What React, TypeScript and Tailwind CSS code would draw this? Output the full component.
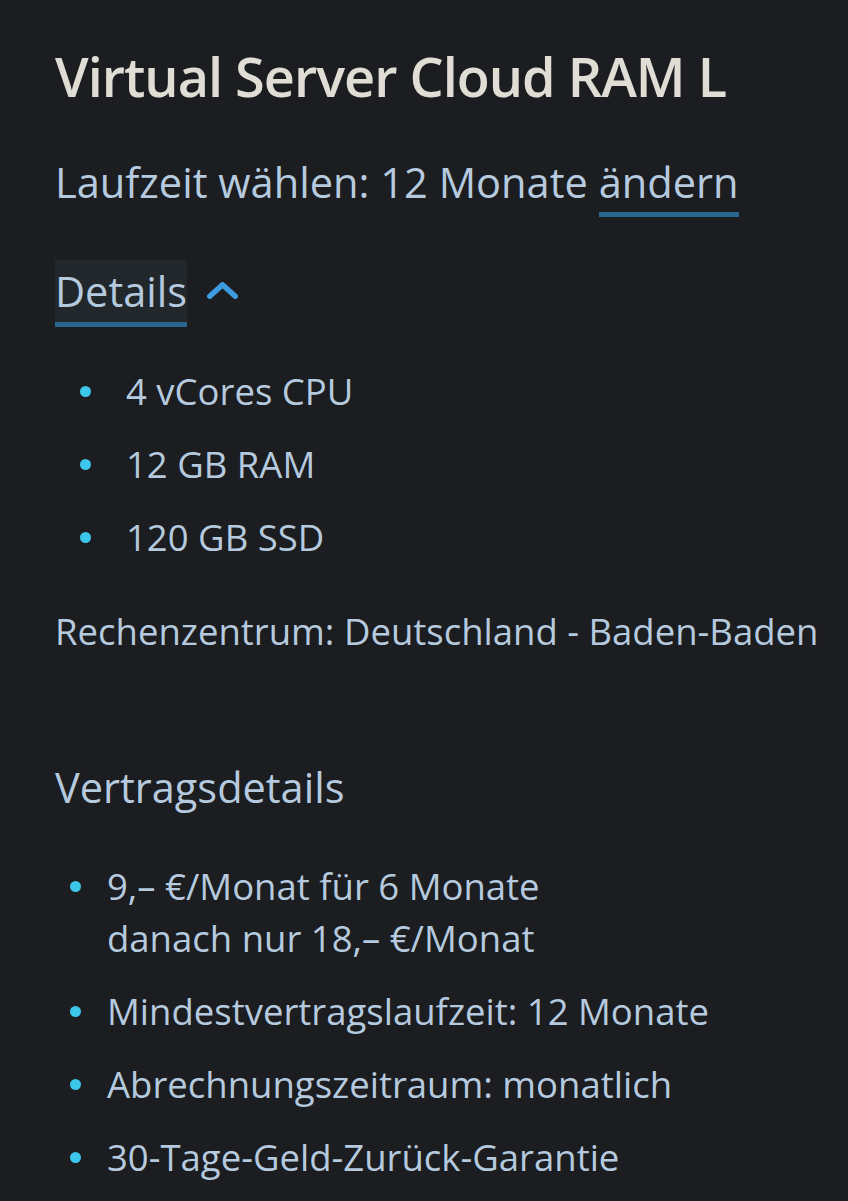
import React from "react";

const Bullet = ({ top, children }: { top: string; children: React.ReactNode }) => (
  <li className="flex items-start">
    <span className={`${top} h-[11px] w-[11px] shrink-0 rounded-full bg-[#3cc6ea]`} />
    {children}
  </li>
);

const App = () => {
  return (
    <div
      className="min-h-screen w-full bg-[#1b1d20] pl-[55px] pr-[20px] pt-[40px] text-[#b6cadf]"
      style={{ fontFamily: '"Open Sans", "Noto Sans", sans-serif' }}
    >
      <h1 className="text-[54px] font-semibold leading-[72px] tracking-[-1px] text-[#e0ddd5]">Virtual Server Cloud RAM L</h1>

      <div className="mt-[42px] text-[41.6px] leading-[56px]">
        Laufzeit wählen: 12 Monate{" "}
        <a className="border-b-[5px] border-[#2a6690] pb-[2px]">ändern</a>
      </div>

      <div className="mt-[50px] flex items-start gap-[20px]">
        <button className="border-b-[5px] border-[#2a6690] bg-[#22272c] text-[41.5px] leading-[62px]">Details</button>
        <svg width="31" height="17" viewBox="0 0 31 17" className="mt-[22px]">
          <path
            d="M2.75 14.25 L15.5 2.75 L28.25 14.25"
            fill="none"
            stroke="#3d9be0"
            strokeWidth="5.5"
            strokeLinecap="round"
            strokeLinejoin="round"
          />
        </svg>
      </div>

      <ul className="mt-[39px] flex flex-col gap-[23px] pl-[25px] text-[36.5px] leading-[50px]">
        <Bullet top="mt-[20px]"><div className="pl-[35px]">4 vCores CPU</div></Bullet>
        <Bullet top="mt-[20px]"><div className="pl-[35px]">12 GB RAM</div></Bullet>
        <Bullet top="mt-[20px]"><div className="pl-[35px]">120 GB SSD</div></Bullet>
      </ul>

      <p className="mt-[44px] whitespace-nowrap text-[36.5px] leading-[50px]">Rechenzentrum: Deutschland - Baden-Baden</p>

      <h2 className="mt-[103px] text-[41.5px] leading-[56px]">Vertragsdetails</h2>

      <ul className="mt-[45px] flex flex-col gap-[21px] pl-[15px] text-[36.5px] leading-[52px]">
        <Bullet top="mt-[21px]">
          <div className="pl-[26px]">
            9,– €/Monat für 6 Monate
            <br />
            danach nur 18,– €/Monat
          </div>
        </Bullet>
        <Bullet top="mt-[21px]"><div className="pl-[26px]">Mindestvertragslaufzeit: 12 Monate</div></Bullet>
        <Bullet top="mt-[21px]"><div className="pl-[26px]">Abrechnungszeitraum: monatlich</div></Bullet>
        <Bullet top="mt-[21px]"><div className="pl-[26px]">30-Tage-Geld-Zurück-Garantie</div></Bullet>
      </ul>
    </div>
  );
};

export default App;
